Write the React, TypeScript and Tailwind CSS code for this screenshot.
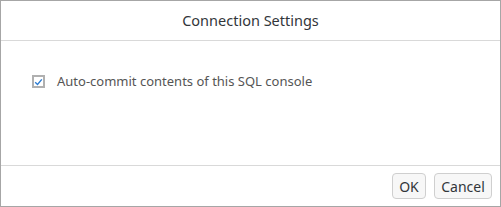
import React from "react";

export default function App() {
  return (
    <div
      className="w-[501px] h-[207px] flex flex-col bg-white border border-[#a6a6a6] text-[#32363a]"
      style={{ fontFamily: '"Noto Sans", "Open Sans", Arial, sans-serif' }}
    >
      <div className="h-[40px] shrink-0 flex items-center justify-center border-b border-[#d9d9d9] text-[14.5px] text-[#32363a]">
        Connection Settings
      </div>
      <div className="flex-1 px-[31px] pt-[31px]">
        <label className="flex items-center gap-[12px] text-[13px] text-[#555555]">
          <span className="w-[13px] h-[13px] border-2 border-[#b0b0b0] bg-white flex items-center justify-center">
            <svg width="9" height="8" viewBox="0 0 9 8">
              <path d="M1.2 4.2 L3.5 6.4 L7.8 1.4" fill="none" stroke="#2b7cd3" strokeWidth="1.4" />
            </svg>
          </span>
          Auto-commit contents of this SQL console
        </label>
      </div>
      <div className="h-[41px] shrink-0 border-t border-[#d9d9d9] flex items-start justify-end gap-[8px] pt-[7px] pr-[8px]">
        <button className="h-[26px] w-[34px] rounded-[4px] border border-[#cfcfcf] bg-[#f7f7f7] text-[14px] text-[#32363a]">
          OK
        </button>
        <button className="h-[26px] w-[58px] rounded-[4px] border border-[#cfcfcf] bg-[#f7f7f7] text-[14px] text-[#32363a]">
          Cancel
        </button>
      </div>
    </div>
  );
}
